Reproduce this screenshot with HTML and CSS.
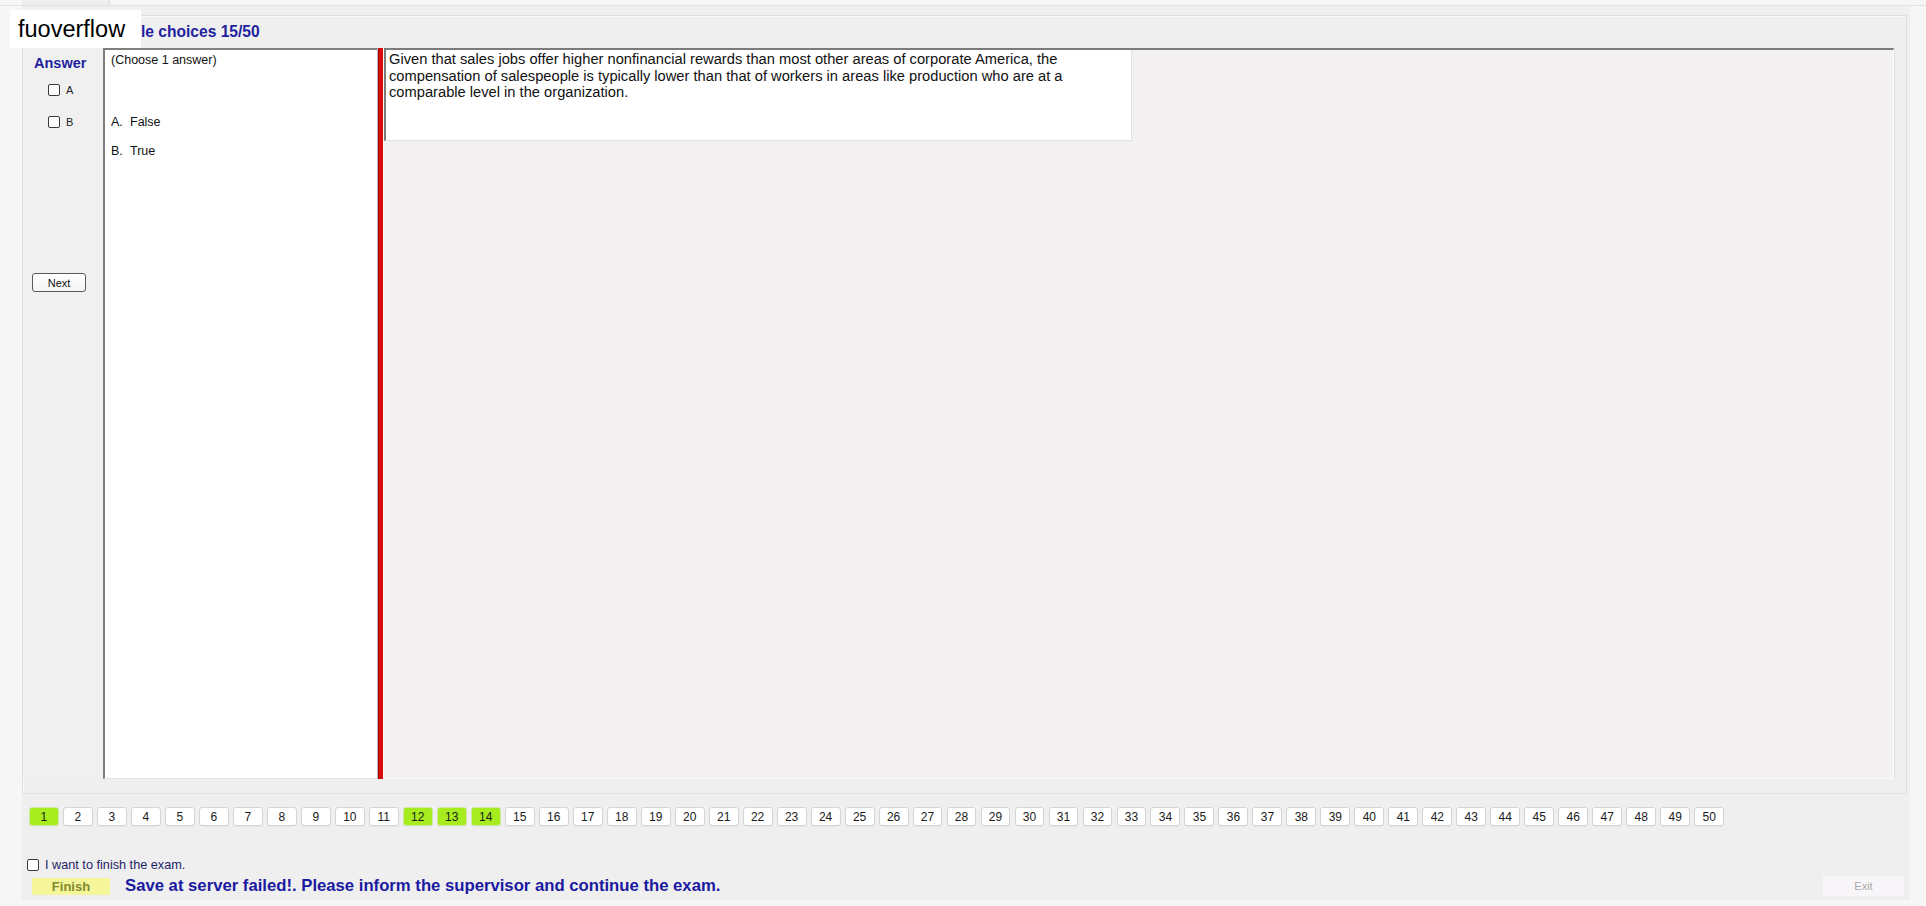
FILE: index.html
```html
<!DOCTYPE html>
<html lang="en">
<head>
<meta charset="utf-8">
<title>Exam</title>
<link rel="stylesheet" href="styles.css">
</head>
<body>
<div class="tabstrip"><div class="tab"></div></div>
<div class="page">
  <div class="frame">
    <div class="title">Multiple choices 15/50</div>
    <div class="content">
      <aside class="answer-col">
        <div class="answer-label">Answer</div>
        <label class="opt opt-a"><input type="checkbox" class="cb"><span>A</span></label>
        <label class="opt opt-b"><input type="checkbox" class="cb"><span>B</span></label>
        <button class="next">Next</button>
      </aside>
      <section class="choices">
        <p class="hint">(Choose 1 answer)</p>
        <p class="choice choice-a"><span class="key">A.</span>False</p>
        <p class="choice choice-b"><span class="key">B.</span>True</p>
      </section>
      <div class="splitter"></div>
      <section class="question-area">
        <div class="question">
          <p class="qtext">Given that sales jobs offer higher nonfinancial rewards than most other areas of corporate America, the compensation of salespeople is typically lower than that of workers in areas like production who are at a comparable level in the organization.</p>
        </div>
      </section>
    </div>
  </div>
  <nav class="pager">
    <button class="pg done">1</button><button class="pg">2</button><button class="pg">3</button><button class="pg">4</button><button class="pg">5</button><button class="pg">6</button><button class="pg">7</button><button class="pg">8</button><button class="pg">9</button><button class="pg">10</button>
    <button class="pg">11</button><button class="pg done">12</button><button class="pg done">13</button><button class="pg done">14</button><button class="pg">15</button><button class="pg">16</button><button class="pg">17</button><button class="pg">18</button><button class="pg">19</button><button class="pg">20</button>
    <button class="pg">21</button><button class="pg">22</button><button class="pg">23</button><button class="pg">24</button><button class="pg">25</button><button class="pg">26</button><button class="pg">27</button><button class="pg">28</button><button class="pg">29</button><button class="pg">30</button>
    <button class="pg">31</button><button class="pg">32</button><button class="pg">33</button><button class="pg">34</button><button class="pg">35</button><button class="pg">36</button><button class="pg">37</button><button class="pg">38</button><button class="pg">39</button><button class="pg">40</button>
    <button class="pg">41</button><button class="pg">42</button><button class="pg">43</button><button class="pg">44</button><button class="pg">45</button><button class="pg">46</button><button class="pg">47</button><button class="pg">48</button><button class="pg">49</button><button class="pg">50</button>
  </nav>
  <label class="finish-check"><input type="checkbox" class="cb"><span>I want to finish the exam.</span></label>
  <div class="bottom">
    <button class="finish">Finish</button>
    <span class="msg">Save at server failed!. Please inform the supervisor and continue the exam.</span>
    <button class="exit">Exit</button>
  </div>
</div>
<div class="brand">fuoverflow</div>
</body>
</html>
```
FILE: styles.css
```css
* { box-sizing: border-box; }
html, body { margin: 0; padding: 0; }
body {
  width: 1926px;
  height: 906px;
  overflow: hidden;
  background: #f7f6f7;
  font-family: "Liberation Sans", Arial, sans-serif;
  color: #000;
  position: relative;
}
p { margin: 0; }
button { font-family: "Liberation Sans", Arial, sans-serif; padding: 0; cursor: default; }

.tabstrip {
  height: 6px;
  border-bottom: 1px solid #e2e2e2;
  padding-left: 20px;
}
.tab {
  width: 90px;
  height: 5px;
  background: #eeeeee;
  border-left: 1px solid #fdfdfd;
  border-right: 1px solid #dddddd;
}

.page {
  margin-left: 22px;
  width: 1888px;
  height: 894px;
  background: #f0eff0;
  display: flex;
  flex-direction: column;
}

.frame {
  margin-top: 9px;
  width: 1885px;
  height: 779px;
  border: 1px solid #e0e0e0;
  box-shadow: inset 1px 1px 0 #fafafa;
  padding-right: 12px;
  padding-bottom: 14px;
  display: flex;
  flex-direction: column;
}
.title {
  height: 32px;
  line-height: 32px;
  padding-left: 72px;
  font-weight: bold;
  font-size: 15.6px;
  color: #1f1f9f;
}
.content {
  height: 731px;
  display: flex;
}

.answer-col {
  width: 80px;
  background: #f0f0f0;
  display: flex;
  flex-direction: column;
}
.answer-label {
  margin-top: 7px;
  padding-left: 11px;
  font-weight: bold;
  font-size: 14.5px;
  line-height: 16px;
  color: #1f1f9f;
}
.opt {
  display: flex;
  align-items: center;
  gap: 6px;
  height: 20px;
  padding-left: 25px;
  font-size: 11px;
  color: #222;
}
.opt-a { margin-top: 9px; }
.opt-b { margin-top: 12px; }

.cb {
  appearance: none;
  -webkit-appearance: none;
  margin: 0;
  width: 12px;
  height: 12px;
  border: 1px solid #3a3a3a;
  border-radius: 2px;
  background: #fff;
  flex: none;
}

.next {
  margin-top: 141px;
  margin-left: 9px;
  width: 54px;
  height: 19px;
  border: 1px solid #5a5a5a;
  border-radius: 3px;
  background: linear-gradient(#ffffff, #f4f4f4);
  font-size: 11px;
  color: #111;
}

.choices {
  width: 274px;
  background: #fff;
  border-top: 2px solid #808080;
  border-left: 2px solid #7d7d7d;
  border-bottom: 1px solid #e4e4e4;
  padding-left: 6px;
  padding-top: 3px;
  font-size: 12.5px;
  line-height: 15px;
  color: #111;
}
.choice-a { margin-top: 47px; }
.choice-b { margin-top: 14px; }
.key { display: inline-block; width: 19px; }

.splitter {
  width: 7px;
  background: #dd0a0a;
  border-left: 1px solid #b9b9b9;
  border-right: 1px solid #f6f6f6;
  box-shadow: inset 1px 0 0 #a60000;
}

.question-area {
  flex: 1;
  background: #f2f0f1;
  border-top: 2px solid #7b7b7b;
  border-right: 1px solid #fbfbfb;
  border-bottom: 1px solid #fbfbfb;
  box-shadow: 1px 0 0 #dedede;
}
.question {
  width: 748px;
  height: 91px;
  background: #fff;
  border-left: 2px solid #7b7b7b;
  border-right: 1px solid #e2e2e2;
  border-bottom: 1px solid #e2e2e2;
  padding-left: 3px;
  padding-top: 1px;
}
.qtext {
  width: 712px;
  font-size: 14.7px;
  line-height: 16.5px;
  color: #111;
}

.pager {
  margin-top: 13px;
  padding-left: 7px;
  display: flex;
  gap: 4.1px;
}
.pg {
  width: 29.9px;
  height: 19px;
  border: 1px solid #d4d4d4;
  border-radius: 3px;
  background: #ffffff;
  font-size: 12px;
  color: #1a1a1a;
  box-shadow: 0 1px 0 #e6e6e6;
}
.pg.done {
  background: #a6ec1e;
  border-color: #cfe9a4;
}

.finish-check {
  margin-top: 32px;
  margin-left: 5px;
  height: 14px;
  display: flex;
  align-items: center;
  gap: 6px;
  font-size: 12.7px;
  color: #1e1e66;
}

.bottom {
  margin-top: 4px;
  height: 20px;
  display: flex;
  align-items: center;
}
.finish {
  margin-left: 10px;
  width: 78px;
  height: 17px;
  border: none;
  background: #f5f69c;
  color: #82882c;
  font-weight: bold;
  font-size: 13px;
}
.msg {
  margin-left: 15px;
  font-weight: bold;
  font-size: 16.7px;
  color: #1a1aa0;
}
.exit {
  margin-left: auto;
  margin-right: 6px;
  width: 81px;
  height: 20px;
  border: none;
  background: #f8f6f8;
  color: #a9a9a9;
  font-size: 11px;
}

.brand {
  position: absolute;
  left: 10px;
  top: 10px;
  width: 131px;
  height: 38px;
  background: #fff;
  padding-left: 8px;
  font-size: 23.5px;
  line-height: 38px;
  color: #000;
}
```
